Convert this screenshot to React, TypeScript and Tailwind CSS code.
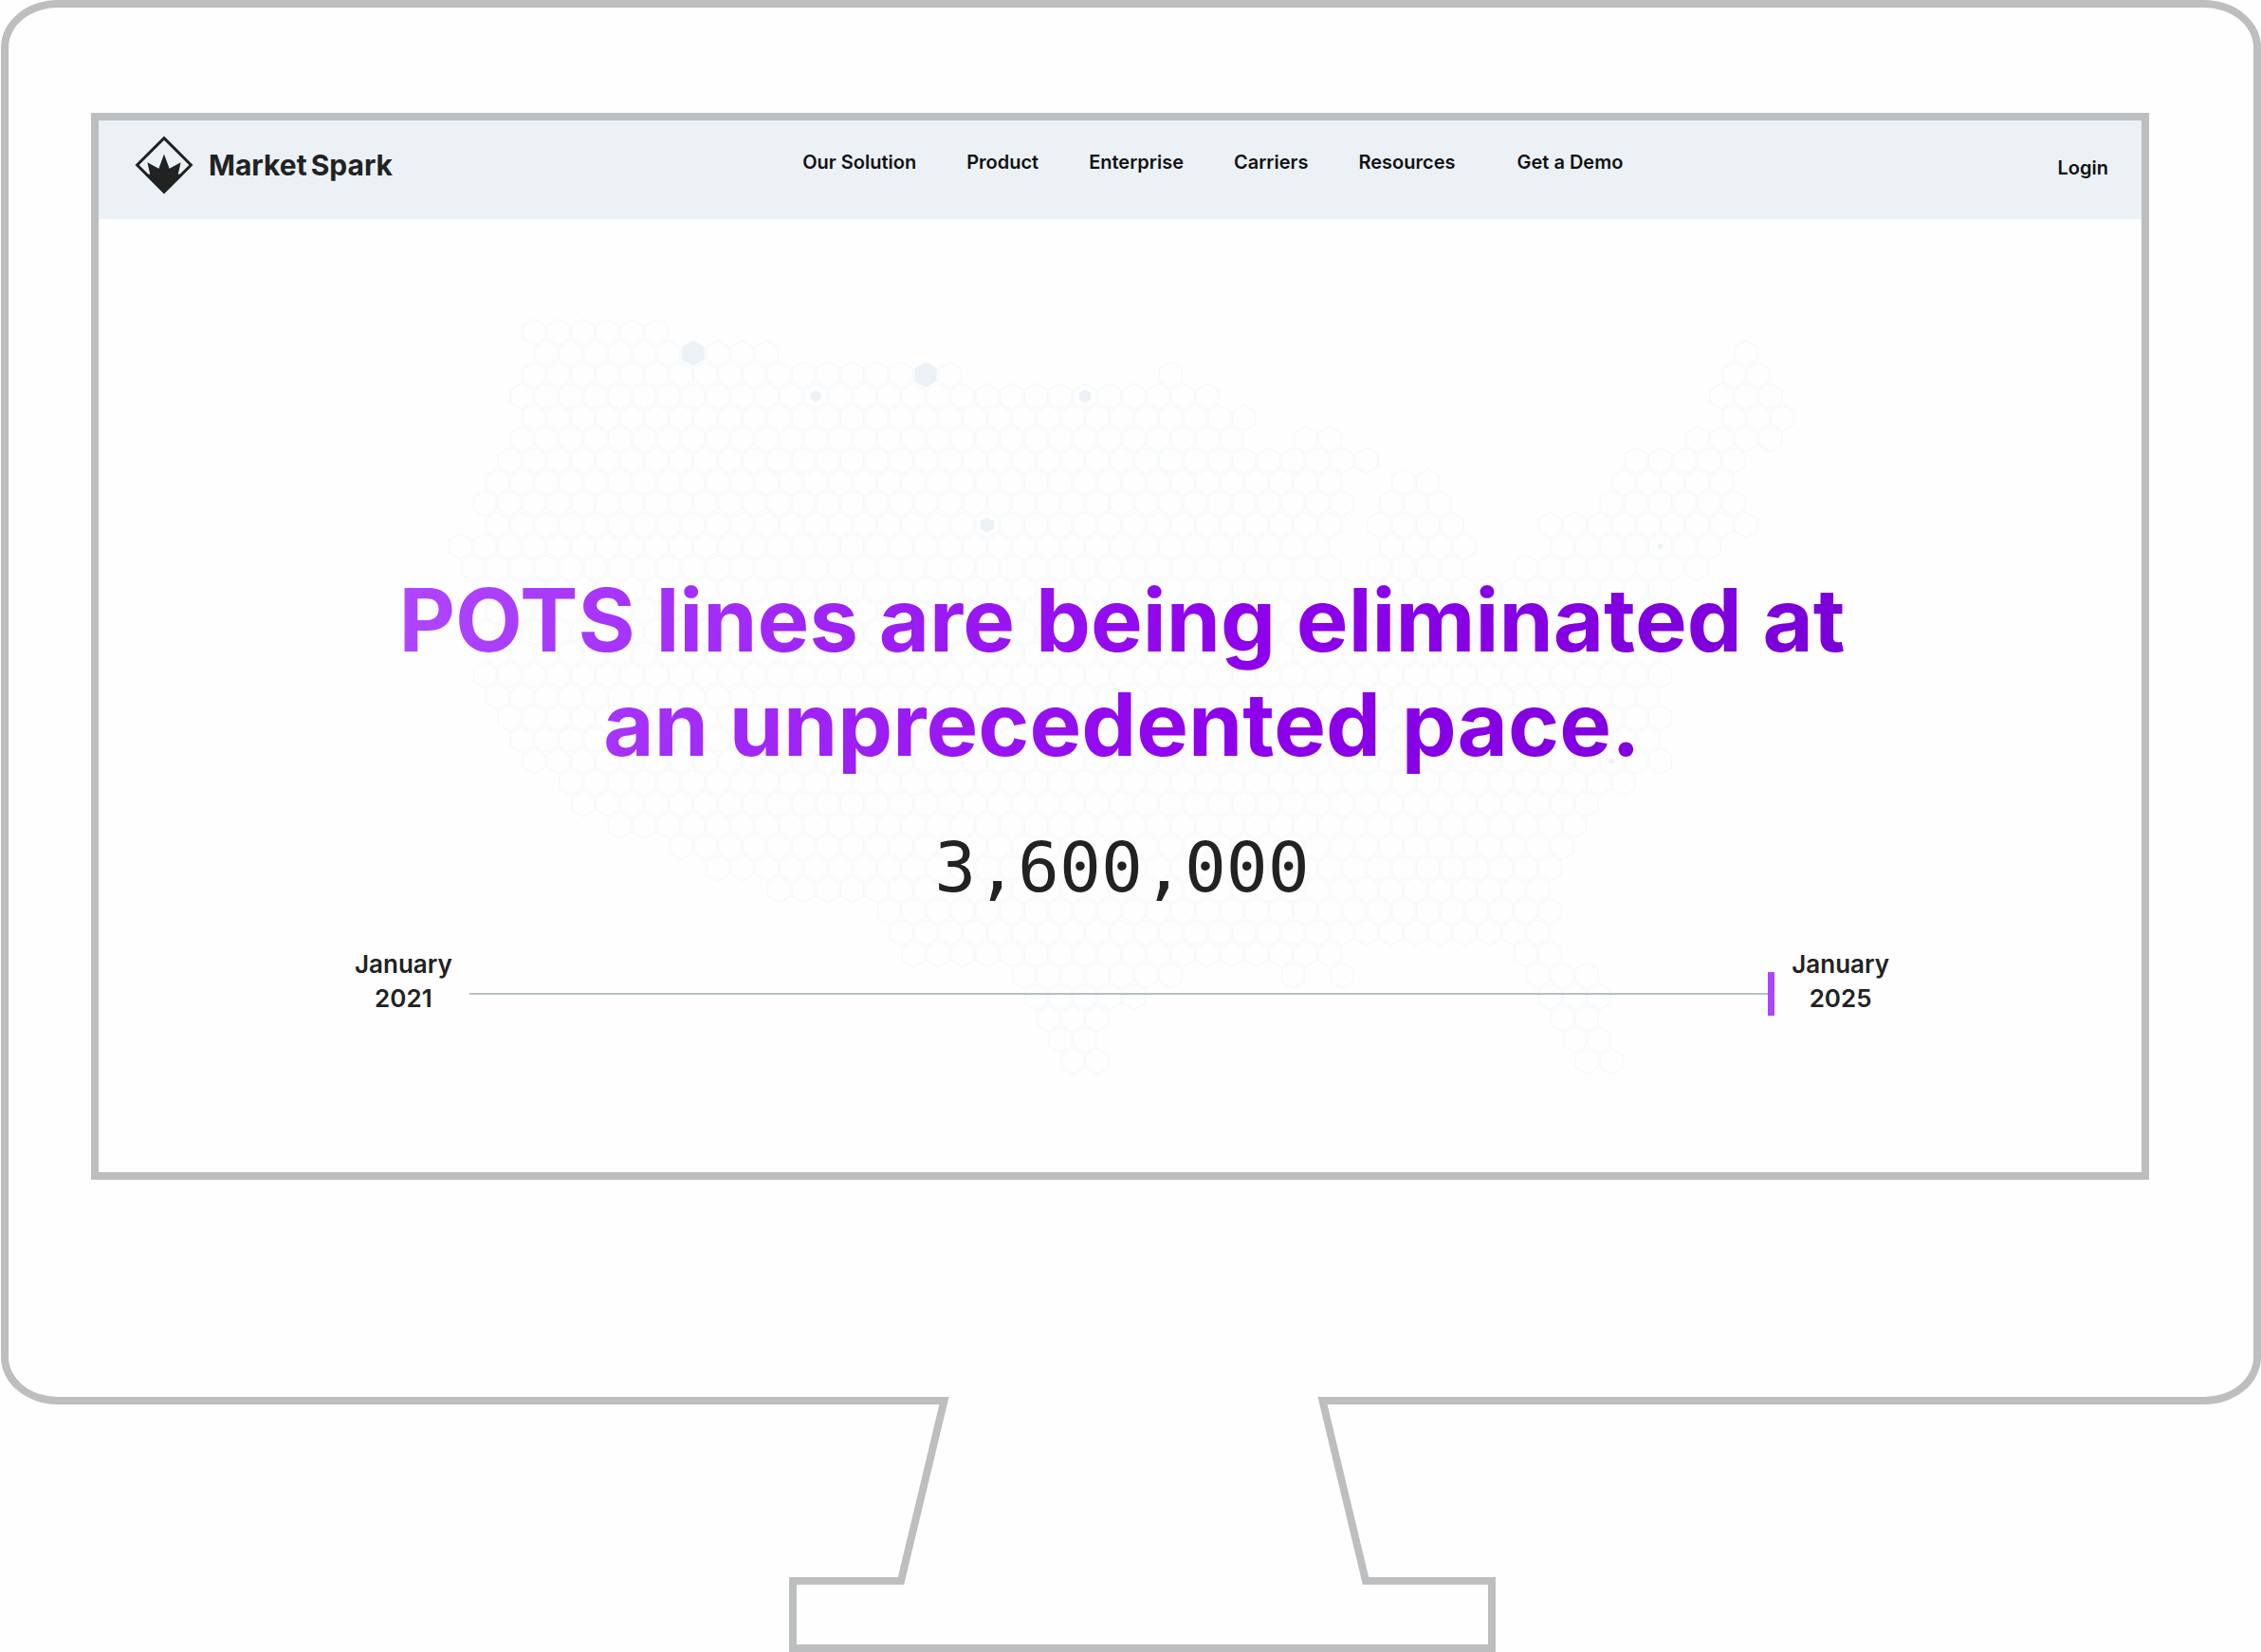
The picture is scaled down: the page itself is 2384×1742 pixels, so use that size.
const navLinks = [
  { label: 'Our Solution', className: '' },
  { label: 'Product', className: '' },
  { label: 'Enterprise', className: '' },
  { label: 'Carriers', className: '' },
  { label: 'Resources', className: '' },
  { label: 'Get a Demo', className: 'ml-3' },
];

// Each row is a list of [first, last] runs, counted in half hexagon widths
const mapRows: number[][][] = [
  [[0, 10]],
  [[1, 19], [99, 99]],
  [[0, 34], [52, 52], [98, 100]],
  [[-1, 55], [97, 101]],
  [[0, 58], [98, 102]],
  [[-1, 57], [63, 65], [95, 101]],
  [[-2, 68], [90, 98]],
  [[-3, 65], [71, 73], [89, 97]],
  [[-4, 66], [70, 74], [88, 98]],
  [[-3, 65], [69, 75], [83, 99]],
  [[-6, 64], [70, 76], [84, 96]],
  [[-5, 65], [69, 75], [81, 95]],
  [[-4, 66], [70, 92]],
  [[-3, 91]],
  [[-4, 90]],
  [[-3, 91]],
  [[-4, 92]],
  [[-3, 91]],
  [[-2, 92]],
  [[-1, 91]],
  [[0, 92]],
  [[3, 89]],
  [[4, 86]],
  [[7, 85]],
  [[12, 84]],
  [[15, 83]],
  [[20, 82]],
  [[29, 83]],
  [[30, 82]],
  [[31, 65], [81, 83]],
  [[40, 52], [62, 62], [66, 66], [82, 86]],
  [[41, 49], [83, 87]],
  [[42, 46], [84, 86]],
  [[43, 45], [85, 87]],
  [[44, 46], [86, 88]],
];

const markers = [
  { row: 1, col: 13, size: 13 },
  { row: 2, col: 32, size: 13 },
  { row: 3, col: 23, size: 6 },
  { row: 3, col: 45, size: 7 },
  { row: 9, col: 37, size: 8 },
  { row: 10, col: 92, size: 3 },
  { row: 20, col: 88, size: 3 },
];

function hexagon(row: number, col: number, r: number) {
  const x = 93 + col * 12.91;
  const y = 15 + row * 22.62;
  const w = r * 0.88;
  const h = r / 2;
  return `M${x} ${y - r}L${x + w} ${y - h}V${y + h}L${x} ${y + r}L${x - w} ${y + h}V${y - h}Z`;
}

function HexMap() {
  const cells: string[] = [];
  mapRows.forEach((runs, row) => {
    runs.forEach(([first, last]) => {
      for (let col = first; col <= last; col += 2) {
        cells.push(hexagon(row, col, 13.5));
      }
    });
  });

  return (
    <svg
      viewBox="0 0 1422 800"
      className="absolute inset-x-0 top-[104px] mx-auto w-[1422px] h-[800px]"
      aria-hidden="true"
    >
      <path d={cells.join('')} fill="none" stroke="#f6f9fa" strokeWidth="1.4" />
      <path d={markers.map((m) => hexagon(m.row, m.col, m.size)).join('')} fill="#ebf1f5" />
    </svg>
  );
}

function Logo() {
  return (
    <a href="#" className="flex items-center gap-4 text-[#222222]">
      <svg viewBox="0 0 62 62" className="w-[62px] h-[62px]" aria-hidden="true">
        <path d="M31 2.6 59.4 31 31 59.4 2.6 31Z" fill="none" stroke="currentColor" strokeWidth="3" />
        <path
          d="M31 19.5 36.6 34.8 48.6 28.3 45.8 40.8 51.6 40.4 31 61 10.4 40.4 16.2 40.8 13.4 28.3 25.4 34.8Z"
          fill="currentColor"
        />
      </svg>
      <span className="flex gap-1 text-3xl font-bold">
        <span>Market</span>
        <span>Spark</span>
      </span>
    </a>
  );
}

function Header() {
  return (
    <header className="h-[104px] pl-[38px] pr-[35px] pb-2.5 flex items-center justify-between bg-[#ebf1f5]">
      <Logo />
      <nav className="mr-[26px] pb-1.5 flex gap-[53px] text-xl font-semibold text-[#111111]">
        {navLinks.map((link) => (
          <a key={link.label} href="#" className={link.className}>
            {link.label}
          </a>
        ))}
      </nav>
      <a href="#" className="pt-1.5 text-xl font-semibold text-[#111111]">
        Login
      </a>
    </header>
  );
}

function Timeline() {
  return (
    <div className="flex items-center text-[26px] leading-9 font-semibold text-[#222222]">
      <p className="text-center">
        January
        <br />
        2021
      </p>
      <div className="mx-[18px] pt-[26px] flex grow items-center">
        <div className="h-0.5 grow bg-[#b8c0c5]" />
        <div className="h-[46px] w-[7px] bg-[#ae44ff]" />
      </div>
      <p className="text-center">
        January
        <br />
        2025
      </p>
    </div>
  );
}

function Hero() {
  return (
    <main className="relative pt-[368px] pb-[165px] pl-1">
      <HexMap />
      <div className="relative mx-auto max-w-[1618px] text-center">
        <h1 className="bg-[linear-gradient(100deg,#b14bff_0%,#8e00eb_58%,#7800d6_100%)] bg-clip-text text-[92px] leading-[110px] font-bold text-transparent">
          POTS lines are being eliminated at
          <br />
          an unprecedented pace.
        </h1>
        <p className="mt-14 mb-11 font-['DejaVu_Sans_Mono',monospace] text-[73px] leading-20 text-[#222222]">
          3,600,000
        </p>
        <Timeline />
      </div>
    </main>
  );
}

function Stand() {
  return (
    <div className="-mt-2 pl-6 flex justify-center">
      <svg viewBox="0 0 745 269" className="relative w-[745px] h-[269px]" aria-hidden="true">
        <path d="M168 0H558L560 8H166Z" fill="#fefefe" />
        <path
          d="M140 4H163.5L118 194H4V265H741V194H608L562.5 4H586"
          fill="none"
          stroke="#bdbec0"
          strokeWidth="8"
        />
      </svg>
    </div>
  );
}

export default function App() {
  return (
    <div className="bg-[#fefefe] font-['Inter',sans-serif]">
      <div className="ml-px border-8 border-[#bdbec0] rounded-[60px/50px] pt-[111px] pb-[229px] pl-[87px] pr-[110px]">
        <div className="border-8 border-[#bdbec0]">
          <Header />
          <Hero />
        </div>
      </div>
      <Stand />
    </div>
  );
}
